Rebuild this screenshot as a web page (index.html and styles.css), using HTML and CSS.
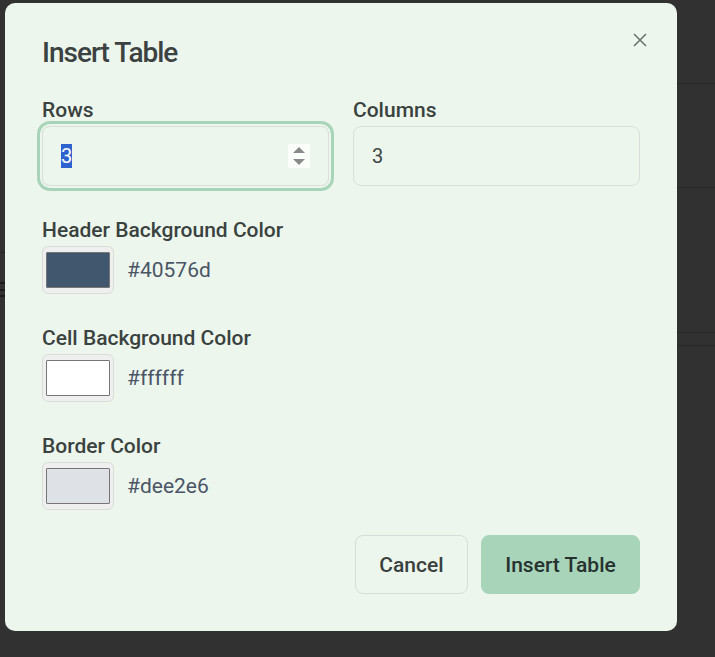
FILE: index.html
```html
<!DOCTYPE html>
<html lang="en">
<head>
<meta charset="utf-8">
<title>Insert Table</title>
<link rel="stylesheet" href="styles.css">
</head>
<body>
<div class="dialog">
  <button class="close" aria-label="Close">
    <svg width="16" height="16" viewBox="0 0 16 16"><path d="M2 2 L14 14 M14 2 L2 14" stroke="#6b7471" stroke-width="1.6" fill="none"/></svg>
  </button>
  <h2 class="title">Insert Table</h2>
  <div class="grid">
    <div class="field">
      <label class="label">Rows</label>
      <div class="input focused">
        <span class="sel">3</span>
        <span class="spin">
          <svg width="22" height="24" viewBox="0 0 22 24"><rect width="22" height="24" fill="#fbfdfb"/><path d="M5 9 L11 3 L17 9 Z" fill="#8a8a8a"/><path d="M5 15 L17 15 L11 21 Z" fill="#8a8a8a"/></svg>
        </span>
      </div>
    </div>
    <div class="field">
      <label class="label">Columns</label>
      <div class="input"><span>3</span></div>
    </div>
  </div>
  <div class="field color-field">
    <label class="label">Header Background Color</label>
    <div class="color-row">
      <span class="swatch"><span class="chip chip-header"></span></span>
      <span class="hex">#40576d</span>
    </div>
  </div>
  <div class="field color-field">
    <label class="label">Cell Background Color</label>
    <div class="color-row">
      <span class="swatch"><span class="chip chip-cell"></span></span>
      <span class="hex">#ffffff</span>
    </div>
  </div>
  <div class="field color-field">
    <label class="label">Border Color</label>
    <div class="color-row">
      <span class="swatch"><span class="chip chip-border"></span></span>
      <span class="hex">#dee2e6</span>
    </div>
  </div>
  <div class="actions">
    <button class="btn btn-cancel">Cancel</button>
    <button class="btn btn-primary">Insert Table</button>
  </div>
</div>
</body>
</html>
```
FILE: styles.css
```css
html, body {
  margin: 0;
  height: 100%;
}
body {
  font-family: Roboto, "Liberation Sans", sans-serif;
  background:
    linear-gradient(#262626, #262626) 0 252px / 5px 1px no-repeat,
    linear-gradient(#1b1b1b, #1b1b1b) 0 282px / 5px 2px no-repeat,
    linear-gradient(#1b1b1b, #1b1b1b) 0 289px / 5px 2px no-repeat,
    linear-gradient(#1b1b1b, #1b1b1b) 0 295px / 5px 2px no-repeat,
    linear-gradient(#282828, #282828) 677px 83px / 40px 1px no-repeat,
    linear-gradient(#282828, #282828) 677px 187px / 40px 1px no-repeat,
    linear-gradient(#282828, #282828) 677px 332px / 40px 1px no-repeat,
    linear-gradient(#282828, #282828) 677px 345px / 40px 1px no-repeat,
    #313131;
  padding: 3px 0 0 5px;
  box-sizing: border-box;
  overflow: hidden;
}
.dialog {
  position: relative;
  width: 672px;
  height: 628px;
  box-sizing: border-box;
  background: #edf6ed;
  border-radius: 10px;
  padding: 33px 37px 0 37px;
  color: #3a4240;
}
.close {
  position: absolute;
  top: 29px;
  right: 29px;
  width: 16px;
  height: 16px;
  padding: 0;
  border: 0;
  background: none;
  display: flex;
}
.title {
  margin: 0;
  font-size: 28px;
  line-height: 34px;
  font-weight: 500;
  letter-spacing: -1px;
  color: #3b4241;
}
.grid {
  display: grid;
  grid-template-columns: 1fr 1fr;
  gap: 24px;
  margin-top: 28px;
}
.field {
  display: flex;
  flex-direction: column;
  gap: 4px;
}
.label {
  font-size: 21px;
  line-height: 24px;
  font-weight: 500;
  color: #3a4240;
}
.input {
  height: 60px;
  box-sizing: border-box;
  border: 1px solid #dadfdc;
  border-radius: 8px;
  display: flex;
  align-items: center;
  padding: 0 18px;
  font-size: 20px;
  color: #3d4543;
}
.input.focused {
  box-shadow: 0 0 0 2px #edf6ed, 0 0 0 5px #a8d5b9;
  justify-content: space-between;
  padding-right: 18px;
}
.sel {
  background: #2e62cf;
  color: #ffffff;
  line-height: 24px;
}
.spin {
  display: flex;
}
.color-field {
  margin-top: 32px;
}
.color-row {
  display: flex;
  align-items: center;
  gap: 13px;
}
.swatch {
  width: 72px;
  height: 48px;
  box-sizing: border-box;
  background: #efefef;
  border: 1px solid #d9dcd9;
  border-radius: 6px;
  display: flex;
  align-items: center;
  justify-content: center;
}
.chip {
  width: 64px;
  height: 36px;
  box-sizing: border-box;
  border: 1px solid #767676;
  border-radius: 1px;
}
.chip-header { background: #40576d; }
.chip-cell { background: #ffffff; }
.chip-border { background: #dee2e6; }
.hex {
  font-size: 21px;
  color: #4a5566;
}
.actions {
  display: flex;
  justify-content: flex-end;
  gap: 13px;
  margin-top: 25px;
}
.btn {
  height: 59px;
  box-sizing: border-box;
  border-radius: 8px;
  font-family: inherit;
  font-size: 21px;
  font-weight: 500;
  padding: 0;
}
.btn-cancel {
  width: 113px;
  background: transparent;
  border: 1px solid #d6ddd8;
  color: #3a403e;
}
.btn-primary {
  width: 159px;
  background: #a8d5b9;
  border: 1px solid #a8d5b9;
  color: #263130;
}
```
